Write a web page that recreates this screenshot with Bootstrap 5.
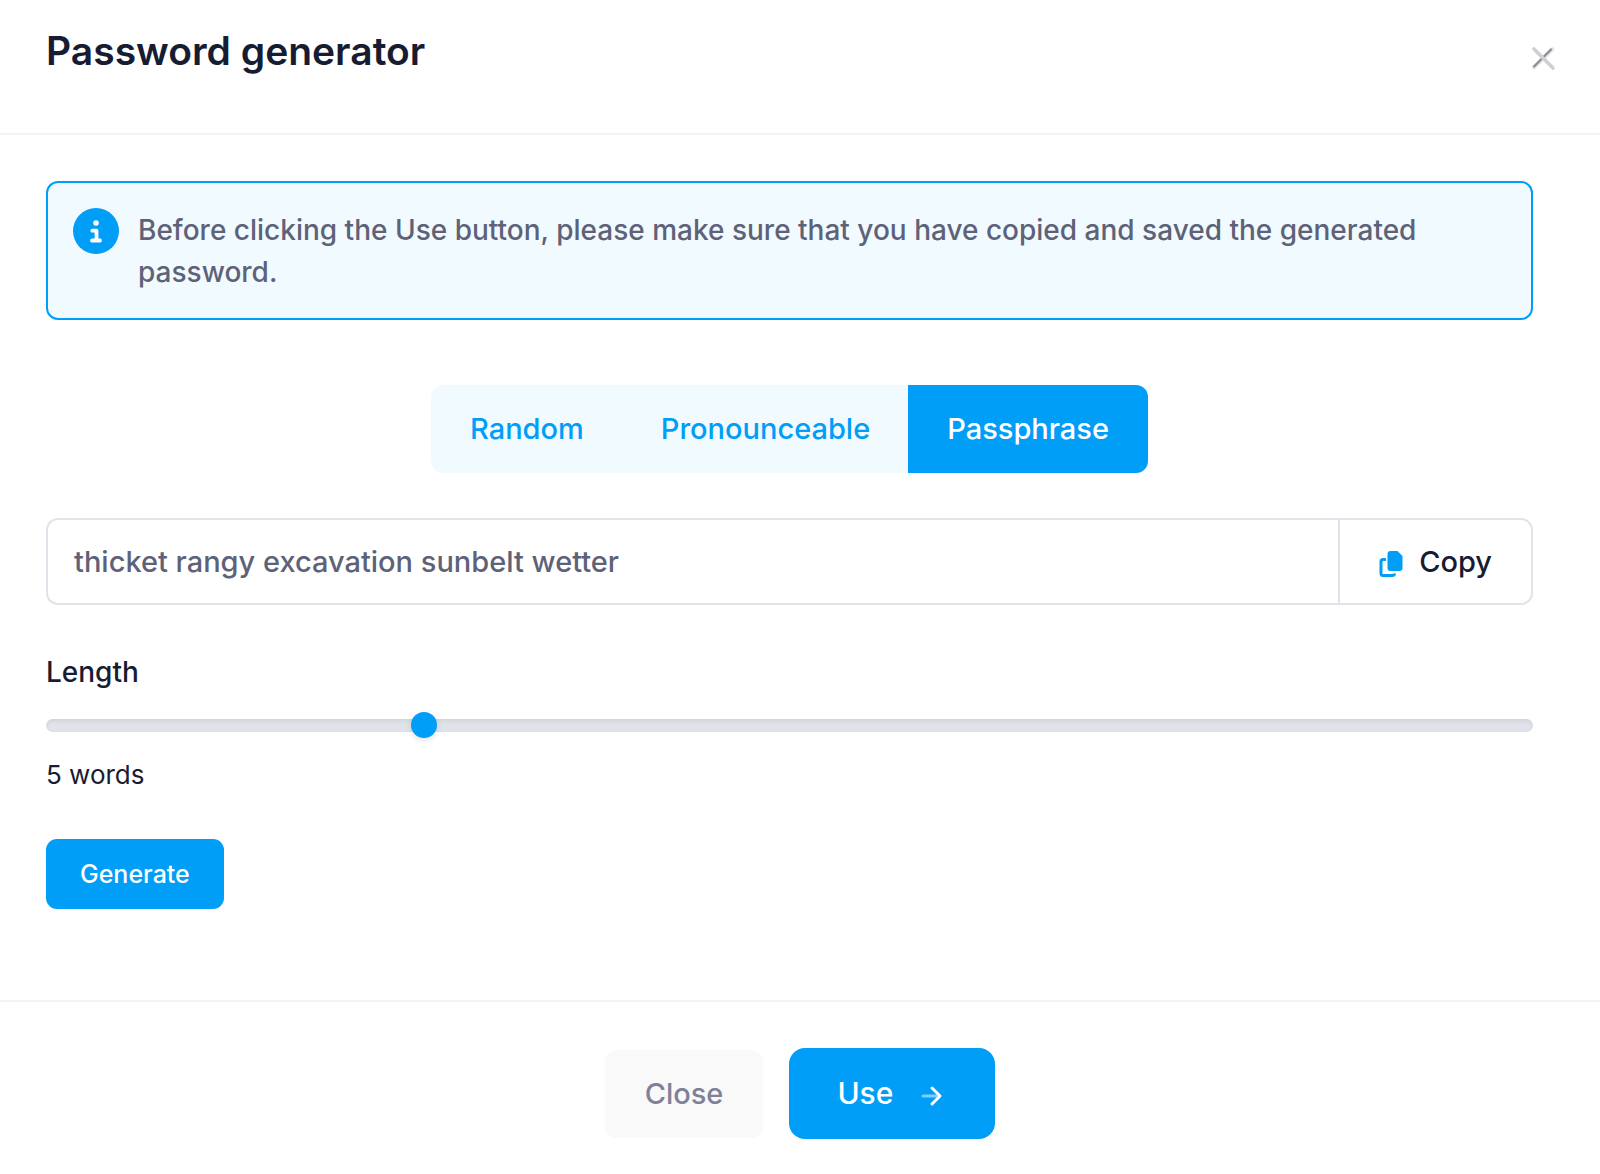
<!DOCTYPE html>
<html lang="en">
<head>
<meta charset="utf-8">
<meta name="viewport" content="width=device-width, initial-scale=1">
<title>Password generator</title>
<link href="https://cdn.jsdelivr.net/npm/bootstrap@5.3.0/dist/css/bootstrap.min.css" rel="stylesheet">
<style>
  body { font-family: Inter, "Liberation Sans", sans-serif; font-weight: 500; font-size: 28px; line-height: 42px; color: #181c32; background: #fff; }
  .dialog-head { padding: 24px 43px 55px 46px; border-bottom: 2px solid #f3f3f3; }
  .dialog-title { font-size: 39px; line-height: 54px; font-weight: 600; }
  .btn-dismiss { width: 28px; height: 28px; margin-top: 20px; border: 0; background: none; }
  .dialog-main { padding: 46px 67px 91px 46px; }
  .notice { padding: 25px; gap: 19px; background: #f1faff; border: 2px solid #009ef7; border-radius: 12px; color: #5e6278; }
  .notice p { padding-top: 1px; }
  .type-tabs { margin: 65px 0 45px; }
  .type-tabs .btn, .btn-close-dialog { --bs-btn-border-width: 0; --bs-btn-padding-x: 39px; --bs-btn-padding-y: 23px; --bs-btn-border-radius: 12px; --bs-btn-font-size: 29px; --bs-btn-line-height: 42px; --bs-btn-font-weight: 500; }
  .type-tabs .btn { --bs-btn-color: #009ef7; --bs-btn-bg: #f1faff; --bs-btn-hover-color: #009ef7; --bs-btn-hover-bg: #e0f3ff; --bs-btn-active-color: #fff; --bs-btn-active-bg: #009ef7; }
  .secret .form-control { height: 87px; padding: 0 26px; font-size: 29px; font-weight: 500; color: #5e6278; border: 2px solid #e1e3ea; border-right: 0; border-radius: 12px; background: #fff; }
  .secret .btn { display: flex; align-items: center; gap: 16px; --bs-btn-border-width: 2px; --bs-btn-border-color: #e1e3ea; --bs-btn-padding-x: 39px; --bs-btn-font-size: 29px; --bs-btn-font-weight: 500; --bs-btn-border-radius: 12px; --bs-btn-color: #181c32; --bs-btn-bg: #fff; }
  .length-label { margin: 46px 0 19px; }
  .length-range { height: 26px; display: block; }
  .length-range::-webkit-slider-runnable-track { height: 13px; border-radius: 13px; background: #e1e3ea; box-shadow: inset 0 2px 4px rgba(0,0,0,.075); }
  .length-range::-webkit-slider-thumb { width: 26px; height: 26px; margin-top: -7px; background: #009ef7; box-shadow: 0 2px 6px rgba(0,0,0,.12); }
  .length-value { margin-top: 17px; font-size: 26px; line-height: 39px; font-weight: 400; }
  .btn-blue { --bs-btn-color: #fff; --bs-btn-bg: #009ef7; --bs-btn-border-width: 0; --bs-btn-hover-color: #fff; --bs-btn-hover-bg: #0095e8; --bs-btn-font-weight: 500; }
  .btn-generate { margin-top: 45px; --bs-btn-padding-x: 34px; --bs-btn-padding-y: 16px; --bs-btn-font-size: 25px; --bs-btn-line-height: 38px; --bs-btn-border-radius: 11px; }
  .dialog-foot { padding: 46px; gap: 26px; border-top: 2px solid #f3f3f3; }
  .btn-close-dialog { --bs-btn-color: #7e8299; --bs-btn-bg: #f9f9f9; --bs-btn-hover-bg: #f3f3f3; --bs-btn-padding-x: 40px; }
  .btn-use { display: flex; align-items: center; gap: 24px; --bs-btn-padding-x: 48px; --bs-btn-padding-y: 23px; --bs-btn-font-size: 30px; --bs-btn-line-height: 45px; --bs-btn-border-radius: 16px; }
</style>
<script src="https://cdn.jsdelivr.net/npm/bootstrap@5.3.0/dist/js/bootstrap.bundle.min.js"></script>
</head>
<body>
<header class="dialog-head d-flex justify-content-between align-items-start">
  <h1 class="dialog-title mb-0">Password generator</h1>
  <button type="button" class="btn-dismiss p-0 d-flex" aria-label="Dismiss">
    <svg width="28" height="28" viewBox="0 0 28 28" fill="none" stroke-linecap="round" aria-hidden="true">
      <path d="M5 23.500L23.500 5" stroke="#e6e6e8" stroke-width="4"/>
      <path d="M5 22.500L22 5.500" stroke="#8f8f8f" stroke-width="2.400"/>
      <path d="M5 5L24 24" stroke="#cdced9" stroke-width="3.600"/>
    </svg>
  </button>
</header>

<main class="dialog-main">
  <div class="notice d-flex align-items-start" role="note">
    <svg class="flex-shrink-0" width="46" height="46" viewBox="0 0 46 46" aria-hidden="true">
      <circle cx="23" cy="23" r="23" fill="#009ef7"/>
      <circle cx="23" cy="15" r="2.800" fill="#fff"/>
      <path d="M19.300 22.700H23.500V32.500M19 32.500H27" fill="none" stroke="#fff" stroke-width="3.800" stroke-linecap="round" stroke-linejoin="round"/>
    </svg>
    <p class="mb-0">Before clicking the Use button, please make sure that you have copied and saved the generated password.</p>
  </div>

  <div class="type-tabs d-flex justify-content-center">
    <div class="btn-group" role="group" aria-label="Password type">
      <button type="button" class="btn">Random</button>
      <button type="button" class="btn">Pronounceable</button>
      <button type="button" class="btn active" aria-pressed="true">Passphrase</button>
    </div>
  </div>

  <div class="secret input-group">
    <input type="text" class="form-control" value="thicket rangy excavation sunbelt wetter" aria-label="Generated password" readonly>
    <button type="button" class="btn">
      <svg width="24" height="32" viewBox="0 -4 24 32" aria-hidden="true">
        <path d="M7 9.500H4Q2 9.500 2 11.500V23.500Q2 25.500 4 25.500H13Q15.500 25.500 15.500 23.500" fill="none" stroke="#009ef7" stroke-width="3"/>
        <path d="M11 1H18.500L23.500 6V18Q23.500 21 20.500 21H11.500Q8.500 21 8.500 18V4Q8.500 1 11.500 1Z" fill="#009ef7"/>
      </svg>
      <span>Copy</span>
    </button>
  </div>

  <label class="length-label d-block" for="length">Length</label>
  <input type="range" class="length-range form-range" id="length" min="3" max="11" value="5">
  <div class="length-value">5 words</div>
  <button type="button" class="btn btn-blue btn-generate">Generate</button>
</main>

<footer class="dialog-foot d-flex justify-content-center align-items-center">
  <button type="button" class="btn btn-close-dialog">Close</button>
  <button type="button" class="btn btn-blue btn-use">
    <span>Use</span>
    <svg width="30" height="30" viewBox="0 0 30 30" fill="none" stroke="#fff" stroke-linecap="round" stroke-linejoin="round" aria-hidden="true">
      <path d="M6 17H20" stroke-width="3" opacity=".5"/>
      <path d="M15 9L23 17L15 25" stroke-width="3"/>
    </svg>
  </button>
</footer>
</body>
</html>
